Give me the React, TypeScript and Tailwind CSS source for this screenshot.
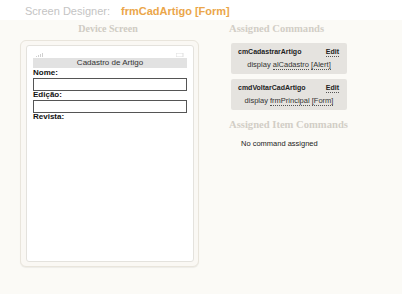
// Screen Designer — device preview with assigned commands

const commands = [
  { name: 'cmCadastrarArtigo', target: 'alCadastro', kind: 'Alert' },
  { name: 'cmdVoltarCadArtigo', target: 'frmPrincipal', kind: 'Form' },
];

function CommandCard({ name, target, kind }: { name: string; target: string; kind: string }) {
  return (
    <div className="w-[116px] h-[31px] bg-[#e5e3df] rounded-[2px] px-[7px] pt-[4px]">
      <div className="flex items-center justify-between text-[7px] font-bold text-[#222] leading-[10px]">
        <span>{name}</span>
        <span className="border-b border-dotted border-[#555] leading-[8px] mr-[1px]">Edit</span>
      </div>
      <div className="text-center text-[7.5px] text-[#333] mt-[3px] leading-[10px]">
        display{' '}
        <span className="border-b border-dotted border-[#555]">{target}</span>{' '}
        <span className="border-b border-dotted border-[#555]">[{kind}]</span>
      </div>
    </div>
  );
}

export default function App() {
  return (
    <div className="w-[402px] h-[294px] bg-[#fbfaf6] font-['Liberation_Sans',sans-serif] overflow-hidden">
      {/* Header */}
      <div className="h-[20px] bg-white flex items-end pl-[25px] pb-[2px] gap-[11px] text-[11px] leading-[14px]">
        <span className="text-[#c4c4c4]">Screen Designer:</span>
        <span className="text-[#eba64a] font-bold">frmCadArtigo [Form]</span>
      </div>

      <div className="flex pt-[3px]">
        {/* Device column */}
        <div className="w-[218px] flex flex-col items-center">
          <div className="text-[10px] font-bold text-[#cfcbc3] leading-[12px] ml-[-2px] font-['Liberation_Serif',serif]">Device Screen</div>
          <div className="mt-[5px] ml-[1px] w-[179px] h-[227px] rounded-[6px] border border-[#e9e5dc] bg-[#faf8f4] shadow-[0_1px_1px_rgba(0,0,0,0.06)] pt-[4px] pl-[5px]">
            <div className="w-[168px] h-[217px] rounded-[3px] border border-[#e4e2dd] bg-white px-[6px] pt-[3px]">
              {/* status bar */}
              <div className="flex items-end justify-between h-[8px] px-[3px]">
                <svg width="8" height="4" viewBox="0 0 8 4">
                  <rect x="0" y="3" width="1" height="1" fill="#d0d0d0" />
                  <rect x="2" y="2" width="1" height="2" fill="#d0d0d0" />
                  <rect x="4" y="1" width="1" height="3" fill="#d0d0d0" />
                  <rect x="6" y="0" width="1" height="4" fill="#d0d0d0" />
                </svg>
                <svg width="8" height="4" viewBox="0 0 8 4">
                  <rect x="0" y="0" width="7" height="4" fill="none" stroke="#d8d8d8" strokeWidth="0.8" />
                </svg>
              </div>
              <div className="mt-[1px] h-[10px] bg-[#e2e2e2] text-center text-[8px] leading-[10px] text-[#333]">
                Cadastro de Artigo
              </div>
              <div className="text-[8px] font-bold text-[#111] leading-[10px]">Nome:</div>
              <div className="h-[13px] border border-[#555]" />
              <div className="text-[8px] font-bold text-[#111] leading-[10px] mt-[-1px]">Edição:</div>
              <div className="h-[13px] border border-[#555]" />
              <div className="text-[8px] font-bold text-[#111] leading-[10px] mt-[-1px]">Revista:</div>
            </div>
          </div>
        </div>

        {/* Commands column */}
        <div className="flex flex-col pl-[11px]">
          <div className="text-[10.6px] font-bold text-[#d2cec6] leading-[12px] font-['Liberation_Serif',serif]">Assigned Commands</div>
          <div className="flex flex-col gap-[5px] mt-[8px] ml-[2px]">
            {commands.map((c) => (
              <CommandCard key={c.name} {...c} />
            ))}
          </div>
          <div className="mt-[9px] text-[10.6px] font-bold text-[#d2cec6] leading-[12px] font-['Liberation_Serif',serif]">Assigned Item Commands</div>
          <div className="mt-[8px] ml-[12px] text-[7.5px] text-[#222] leading-[9px]">No command assigned</div>
        </div>
      </div>
    </div>
  );
}
